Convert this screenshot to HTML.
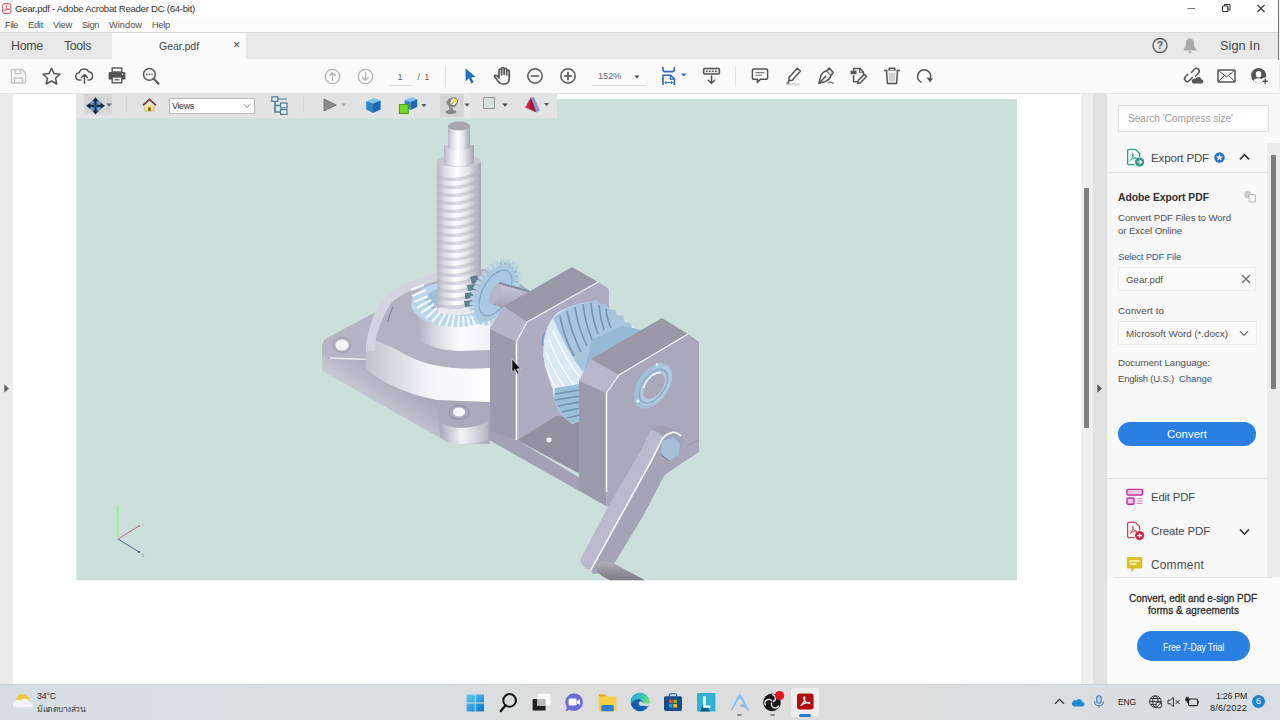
<!DOCTYPE html>
<html>
<head>
<meta charset="utf-8">
<title>Gear.pdf - Adobe Acrobat Reader DC (64-bit)</title>
<style>
*{box-sizing:border-box;margin:0;padding:0}
html,body{width:1280px;height:720px;overflow:hidden;background:#fff;font-family:"Liberation Sans",sans-serif;color:#2b2b2b}
.a{position:absolute}
#root{position:relative;width:1280px;height:720px;overflow:hidden;background:#fff}
.t{position:absolute;white-space:nowrap;line-height:1}
svg{position:absolute;overflow:visible}
.ic{fill:none;stroke:#555;stroke-width:1.5;stroke-linecap:round;stroke-linejoin:round}
</style>
</head>
<body>
<div id="root">
<!-- window chrome -->
<div class="a" style="left:0;top:0;width:1280px;height:17px;background:#fff"></div>
<div class="a" style="left:0;top:17px;width:1280px;height:15px;background:#fcfcfc"></div>
<div class="a" style="left:0;top:32px;width:1280px;height:27px;background:#e8e8e8;border-top:1px solid #d9d9d9"></div>
<div class="a" style="left:112px;top:33px;width:134px;height:26px;background:#fafafa"></div>
<div class="a" style="left:0;top:59px;width:1280px;height:35px;background:#fafafa;border-bottom:1px solid #e4e4e4"></div>
<!-- document area -->
<div class="a" style="left:0;top:94px;width:13px;height:590px;background:#ebebeb"></div>
<div class="a" style="left:13px;top:94px;width:1068px;height:590px;background:#fff"></div>
<div class="a" style="left:1081px;top:94px;width:12px;height:590px;background:#efefef"></div>
<div class="a" style="left:1084px;top:188px;width:5px;height:240px;background:#7f7f7f"></div>
<div class="a" style="left:1093px;top:94px;width:14px;height:590px;background:#e3e3e3"></div>
<svg style="left:1097px;top:384.300px" width="6" height="9" viewBox="0 0 6 9"><path d="M0.3 0.3L5 4.5L0.3 8.7Z" fill="#555"/></svg>
<svg style="left:3.800px;top:384.300px" width="6" height="9" viewBox="0 0 6 9"><path d="M0.3 0.3L5 4.5L0.3 8.7Z" fill="#666"/></svg>
<!-- title icon (pdf) -->
<svg style="left:2px;top:2.6px" width="10" height="11" viewBox="0 0 13 14"><rect x="1" y=".8" width="10.5" height="12.4" rx="1.6" fill="#fff" stroke="#d24a4e" stroke-width="1.3"/><path d="M3.2 10.2C5 8.5 6.3 5.4 6.1 3.6C5.9 2.6 5 3 5.3 4.3C5.9 6.6 8 8.3 9.6 8.3C10.4 8.2 10 7.4 8.9 7.6C7 7.9 4.6 8.9 3.4 10.2Z" fill="none" stroke="#d24a4e" stroke-width="1.1"/></svg>
<!-- window controls -->
<svg style="left:1185px;top:0" width="90" height="17" viewBox="0 0 90 17"><g stroke="#333" stroke-width="1" fill="none"><path d="M2.5 8.5H10" stroke="#777"/><rect x="37.5" y="6" width="5.5" height="5.5" rx="1" stroke-width="1.2"/><path d="M39.5 6V4.5H45V10H43"/><path d="M72.4 4.8L79.6 12M79.600 4.8L72.4 12" stroke-width="1.1"/></g></svg>
<!-- help / bell -->
<svg style="left:1151px;top:37px" width="18" height="18" viewBox="0 0 18 18"><circle cx="9" cy="8.5" r="7" fill="none" stroke="#555" stroke-width="1.3"/><text x="9" y="12.3" font-size="10.5" font-weight="700" text-anchor="middle" fill="#555" font-family="Liberation Sans, sans-serif">?</text></svg>
<svg style="left:1183px;top:38px" width="14" height="16" viewBox="0 0 14 16"><path d="M7 .5C4 .5 3 3 3 5.5C3 8.5 2 10 .6 11.5V12.4H13.4V11.5C12 10 11 8.5 11 5.5C11 3 10 .5 7 .5Z" fill="#a9a9a9"/><path d="M5.4 13.4H8.6C8.6 15.4 5.4 15.4 5.4 13.4Z" fill="#a9a9a9"/></svg>
<!-- left toolbar icons -->
<svg style="left:10px;top:68px" width="17" height="17" viewBox="0 0 17 17"><g fill="none" stroke="#c4c4c4" stroke-width="1.4" stroke-linejoin="round"><path d="M1.5 2.5a1 1 0 0 1 1-1H12L15.5 5V14a1 1 0 0 1-1 1H2.5a1 1 0 0 1-1-1Z"/><path d="M5 1.8V5.6H10.5V1.8M4.5 15V10H12.5V15"/></g></svg>
<svg style="left:42px;top:67px" width="19" height="18" viewBox="0 0 19 18"><path d="M9.5 1.2L12 6.6L17.9 7.2L13.5 11.2L14.8 17L9.5 14L4.2 17L5.5 11.2L1.1 7.2L7 6.6Z" class="ic" stroke-width="1.4"/></svg>
<svg style="left:75px;top:67px" width="19" height="18" viewBox="0 0 19 18"><g class="ic" stroke-width="1.4"><path d="M6 13H4.6A3.6 3.6 0 0 1 4.2 5.8A5 5 0 0 1 13.6 4.8A4.2 4.2 0 0 1 14.6 13H13"/><path d="M9.5 16.5V8M6.6 10.6L9.5 7.6L12.4 10.6"/></g></svg>
<svg style="left:108px;top:67px" width="18" height="17" viewBox="0 0 18 17"><rect x="4.2" y="1" width="9.6" height="4" fill="none" stroke="#555" stroke-width="1.4"/><path d="M2 5H16A1.4 1.4 0 0 1 17.4 6.4V12.6H14V10H4V12.6H.6V6.400000000000001A1.4 1.4 0 0 1 2 5Z" fill="#555"/><rect x="4.2" y="10" width="9.6" height="5.8" fill="#fafafa" stroke="#555" stroke-width="1.4"/><path d="M6.5 12.8H11.5" stroke="#555" stroke-width="1.2"/><circle cx="14.6" cy="7.2" r=".8" fill="#fafafa"/></svg>
<svg style="left:142px;top:67px" width="18" height="18" viewBox="0 0 18 18"><g class="ic" stroke-width="1.5"><circle cx="7.4" cy="7.4" r="5.9"/><path d="M11.8 11.8L16.6 16.8" stroke-width="2"/></g><g fill="#555"><circle cx="4.8" cy="7.4" r=".8"/><circle cx="7.4" cy="7.4" r=".8"/><circle cx="10" cy="7.4" r=".8"/></g></svg>
<!-- page nav -->
<svg style="left:324px;top:68px" width="17" height="17" viewBox="0 0 17 17"><g fill="none" stroke="#b4b4b4" stroke-width="1.3" stroke-linecap="round" stroke-linejoin="round"><circle cx="8.5" cy="8.5" r="7.2"/><path d="M8.5 12.4V4.8M5.6 7.6L8.5 4.6L11.4 7.6"/></g></svg>
<svg style="left:357px;top:68px" width="17" height="17" viewBox="0 0 17 17"><g fill="none" stroke="#b4b4b4" stroke-width="1.3" stroke-linecap="round" stroke-linejoin="round"><circle cx="8.5" cy="8.5" r="7.2"/><path d="M8.5 4.6V12.2M5.6 9.4L8.5 12.4L11.4 9.4"/></g></svg>
<div class="a" style="left:389px;top:85px;width:23px;height:1px;background:#dcdcdc"></div>
<div class="a" style="left:445px;top:66px;width:1px;height:21px;background:#e2e2e2"></div>
<!-- select arrow (blue) -->
<svg style="left:464px;top:67px" width="13" height="18" viewBox="0 0 13 18"><path d="M1.6 1.2V14.2L4.9 11.2L7.3 16.4L9.6 15.3L7.2 10.3L11.6 10Z" fill="#1f6fc4"/></svg>
<!-- hand -->
<svg style="left:492.500px;top:66px" width="22" height="20" viewBox="0 0 19 20" preserveAspectRatio="none"><path d="M5.2 11.4V4.2C5.2 2.6 7.4 2.6 7.4 4.2V9M7.4 8.6V2.8C7.4 1.2 9.6 1.2 9.6 2.8V8.6M9.600000000000001 8.6V3.4C9.6 1.8 11.8 1.8 11.8 3.4V9M11.8 9V5.2C11.8 3.6 14 3.6 14 5.2V12.4C14 16 12 18 9 18C6.600000000000001 18 5.4 16.8 4 14.600000000000001L1.6 11C.8 9.6 2.4 8.6 3.4 9.8L5.2 12" class="ic" stroke-width="1.3"/></svg>
<!-- zoom out/in -->
<svg style="left:526px;top:67px" width="18" height="18" viewBox="0 0 18 18"><g class="ic" stroke-width="1.5"><circle cx="9" cy="9" r="7.2"/><path d="M5.4 9H12.6" stroke-width="1.7"/></g></svg>
<svg style="left:559px;top:67px" width="18" height="18" viewBox="0 0 18 18"><g class="ic" stroke-width="1.5"><circle cx="9" cy="9" r="7.2"/><path d="M5.4 9H12.6M9 5.4V12.6" stroke-width="1.7"/></g></svg>
<div class="a" style="left:592px;top:85px;width:54px;height:1px;background:#dcdcdc"></div>
<svg style="left:634px;top:75px" width="6" height="4" viewBox="0 0 7 5"><path d="M.4 .6H6.6L3.5 4.4Z" fill="#444"/></svg>
<!-- fit width (blue) -->
<svg style="left:661px;top:66px" width="28" height="20" viewBox="0 0 28 20"><g fill="none" stroke="#2a69ae" stroke-width="1.6" stroke-linejoin="round"><path d="M2 1V3.6A2 2 0 0 0 4 5.6H11.400000000000001A2 2 0 0 0 13.4 3.6V1"/><path d="M2 19V9.2H9.6L13.4 13V19"/><path d="M9.4 9.4V13.2H13.2" stroke-width="1.2"/><path d="M4 16.6H11.4M5.4 15.2L4 16.6L5.4 18M10 15.2L11.4 16.6L10 18" stroke-width="1"/></g><path d="M20 7.4H25.6L22.8 10.6Z" fill="#2c6fb7"/></svg>
<!-- keyboard down -->
<svg style="left:702px;top:67px" width="19" height="18" viewBox="0 0 19 18"><g class="ic" stroke-width="1.4"><rect x="1.6" y="1.6" width="15.8" height="5.4" rx="1" fill="#e4e4e4"/><path d="M9.5 9V16M6.4 13.2L9.5 16.4L12.6 13.2"/></g><g fill="#555"><rect x="4" y="3.6" width="1.6" height="1.4"/><rect x="7" y="3.6" width="1.6" height="1.4"/><rect x="10" y="3.6" width="1.6" height="1.4"/><rect x="13" y="3.6" width="1.6" height="1.4"/></g></svg>
<div class="a" style="left:735px;top:66px;width:1px;height:21px;background:#e2e2e2"></div>
<!-- comment -->
<svg style="left:751px;top:67px" width="18" height="18" viewBox="0 0 18 18"><path d="M2.6 2H15.4A1.2 1.2 0 0 1 16.6 3.2V11A1.2 1.2 0 0 1 15.4 12.2H9.4L6.4 15.6V12.2H2.6A1.2 1.2 0 0 1 1.4 11V3.2A1.2 1.2 0 0 1 2.6 2Z" class="ic" stroke-width="1.5" fill="#ececec"/><path d="M4.6 5.6H13.4M4.6 8.2H11" stroke="#777" stroke-width="1.1"/></svg>
<!-- highlighter -->
<svg style="left:784px;top:66px" width="19" height="20" viewBox="0 0 19 20"><path d="M2 18.2H15.6" stroke="#d9d9d9" stroke-width="2.4"/><path d="M13.2 2.2L16.4 5L8.2 14.2L4.8 14.8L5 11.400000000000001Z" class="ic" stroke-width="1.4" fill="#ececec"/><path d="M4.8 14.8L2 17.6H5.6Z" fill="#555"/></svg>
<!-- sign pen -->
<svg style="left:816px;top:66px" width="20" height="20" viewBox="0 0 20 20"><g class="ic" stroke-width="1.4"><path d="M3 17.2L4.800 9.800C6 7.200 8.400 5.400 10.800 4.800L15 9.200C14.400 11.600 12.600 14 10.200 15.200Z"/><path d="M10.800 4.800L13.200 2L17.400 6.400L15 9.200" fill="#dcdcdc"/><path d="M3.200 17L9 11"/><path d="M12.200 17.200C13.200 15.200 13.800 15.400 14 16.800C14.600 15.600 15.400 15.800 15.800 17H17.600" stroke-width="1"/></g><circle cx="9.600" cy="10.400" r="1" fill="#555"/></svg>
<!-- edit pdf -->
<svg style="left:849px;top:66px" width="20" height="20" viewBox="0 0 20 20"><g class="ic" stroke-width="1.4"><path d="M4.6 4V2.4H10.8L14.4 6V8"/><path d="M10.6 2.6V6.2H14.2" stroke-width="1.1"/><path d="M4.6 9.4V15.8H8.6"/><path d="M15.4 8.2L17.6 10.4L11.4 16.8L8.6 17.4L9.2 14.6Z" fill="#ececec"/></g><rect x="1.6" y="4.6" width="6" height="3.6" fill="#555"/></svg>
<!-- trash -->
<svg style="left:883px;top:66px" width="18" height="20" viewBox="0 0 18 20"><g class="ic" stroke-width="1.5"><path d="M1.8 4.4H16.2M6.2 4.2V2.2H11.8V4.2"/><path d="M3.4 4.6L4.4 17.4H13.6L14.6 4.6" fill="#ececec"/></g><path d="M7 7V15M9 7V15M11 7V15" stroke="#bdbdbd" stroke-width="1.2"/></svg>
<!-- rotate -->
<svg style="left:915px;top:66px" width="19" height="20" viewBox="0 0 19 20"><path d="M6 16.2A6.6 6.6 0 1 1 15.4 12.6" class="ic" stroke-width="1.7"/><path d="M11.4 11.6L17.8 12.2L15.2 16.6Z" fill="#555"/></svg>
<!-- right side: link/cloud, mail, user+ -->
<svg style="left:1183px;top:66px" width="22" height="20" viewBox="0 0 22 20"><g class="ic" stroke-width="1.6"><path d="M8.4 6.4L11.4 3.2A2.700000000000001 2.7 0 0 1 15.4 7L12.4 10.2"/><path d="M10.6 8.8L7.6 12A2.7 2.7 0 0 1 3.6 8.2L6 5.6" transform="translate(-1.2 2.6)"/></g><path d="M10.4 17.6H18.8A2.2 2.2 0 0 0 18.6 13.4A3.200000000000001 3.2 0 0 0 12.6 12.8A2.6 2.6 0 0 0 10.4 17.6Z" fill="#555"/></svg>
<svg style="left:1217px;top:69px" width="19" height="14" viewBox="0 0 19 14"><g class="ic" stroke-width="1.3"><rect x="1" y="1" width="17" height="12" rx=".6"/><path d="M1.4 1.4L9.5 8L17.6 1.4M1.4 12.6L7.4 6.4M17.6 12.6L11.6 6.4" stroke-width="1"/></g></svg>
<svg style="left:1250px;top:67px" width="20" height="19" viewBox="0 0 20 19"><circle cx="8.6" cy="8.6" r="7.6" fill="#555"/><path d="M8.6 4A2.8 3.2 0 0 1 8.6 10.4A2.8 3.2 0 0 1 8.6 4ZM3.4 14C4 12 6 11.2 8.6 11.2C11.2 11.2 13.2 12 13.8 14C12.4 15.4 10.6 16 8.6 16C6.6 16 4.8 15.4 3.4 14Z" fill="#fafafa"/><circle cx="15.2" cy="14.2" r="3.8" fill="#fafafa"/><path d="M15.2 11.6V16.8M12.6 14.2H17.8" stroke="#555" stroke-width="1.4"/></svg>
<div class="a" style="left:1278px;top:0;width:1px;height:60px;background:#767676"></div>
<div class="a" style="left:1279px;top:0;width:1px;height:94px;background:#f2f2f2"></div>
<!-- PDF page with 3D model -->
<svg style="left:76px;top:98px" width="942" height="483" viewBox="76 98 942 483">
<defs>
<linearGradient id="gCyl" x1="0" x2="1" y1="0" y2="0"><stop offset="0" stop-color="#b9b9c6"/><stop offset=".18" stop-color="#dcdce6"/><stop offset=".45" stop-color="#ffffff"/><stop offset=".7" stop-color="#e2e2ea"/><stop offset="1" stop-color="#a5a5b3"/></linearGradient>
<linearGradient id="gDome" x1="0" x2="1" y1="0" y2="0"><stop offset="0" stop-color="#c2c1d0"/><stop offset=".22" stop-color="#d9d9e4"/><stop offset=".55" stop-color="#f6f6fb"/><stop offset="1" stop-color="#fefeff"/></linearGradient>
<linearGradient id="gHub" x1="0" x2="1" y1="0" y2="0"><stop offset="0" stop-color="#a9a8ba"/><stop offset=".25" stop-color="#d6d6e2"/><stop offset=".6" stop-color="#fbfbff"/><stop offset="1" stop-color="#f0f0f7"/></linearGradient>
<linearGradient id="gFl" gradientUnits="userSpaceOnUse" x1="408" y1="382" x2="386" y2="414"><stop offset="0" stop-color="#a9a8b9"/><stop offset=".6" stop-color="#babac8"/><stop offset="1" stop-color="#cacad6"/></linearGradient>
<linearGradient id="gLug" x1="0" x2="1" y1="0" y2="0"><stop offset="0" stop-color="#a5a4b6"/><stop offset=".45" stop-color="#f2f2f8"/><stop offset=".75" stop-color="#d5d5e0"/><stop offset="1" stop-color="#b5b4c4"/></linearGradient>
<linearGradient id="gArm" x1="0" x2="1" y1="0" y2="0"><stop offset="0" stop-color="#c3c2d3"/><stop offset="1" stop-color="#aeadc1"/></linearGradient>
<linearGradient id="gWorm" x1="0" x2="1" y1="0" y2="1"><stop offset="0" stop-color="#dbeaf5"/><stop offset=".5" stop-color="#a9cbe0"/><stop offset="1" stop-color="#7fa6c2"/></linearGradient>
<linearGradient id="gShaft" x1="0" x2="0" y1="0" y2="1"><stop offset="0" stop-color="#c9c8d8"/><stop offset=".5" stop-color="#b1b0c3"/><stop offset="1" stop-color="#8f8ea2"/></linearGradient>
<linearGradient id="gHandle" x1="0" x2="0" y1="0" y2="1"><stop offset="0" stop-color="#b4b3be"/><stop offset=".5" stop-color="#94939e"/><stop offset="1" stop-color="#7e7d88"/></linearGradient>
</defs>
<rect x="76.3" y="99.2" width="940.7" height="481.1" fill="#cbe0db"/>
<!-- A: flange plate -->
<path d="M322 346 Q324 338 331 336 L378 311 L380 345 L490 402 L490 444 L449 443 L322 371 Z" fill="url(#gFl)"/>
<path d="M322 346 Q324 338 331 336 L378 311 L380 360 L331 359 Q324 356 322 352 Z" fill="#b6b5c5"/>
<path d="M330 358 L368 359.5" stroke="#e9e9f1" stroke-width="1.6" fill="none"/>
<ellipse cx="342" cy="345" rx="9" ry="7.5" fill="none" stroke="#9c9bad" stroke-width="1"/>
<ellipse cx="342" cy="345" rx="6.5" ry="5.5" fill="#f4f4fa"/>
<!-- front lug -->
<path d="M439 412 Q440 404 459 403 Q482 404 488 412 L488 440 Q470 446 449 443 L440 436 Z" fill="url(#gLug)"/>
<path d="M437 402 L490 402 L490 420 Q478 428 459 428 Q441 426 438 416 Z" fill="#abaabb"/>
<ellipse cx="459" cy="412.5" rx="10" ry="7" fill="none" stroke="#8f8ea1" stroke-width="1"/>
<ellipse cx="459" cy="412" rx="6" ry="4.5" fill="#f6f6fb"/>
<!-- B: dome -->
<path d="M366 355 Q366 338 370 327 Q374 312 385 296 Q400 283 427 275 L490 268 L490 402 L437 400 Q410 395 389 384 Q372 376 366 368 Z" fill="url(#gDome)"/>
<path d="M372 340 Q372 322 380 308 Q392 290 427 277 L490 268 L490 368 Q440 372 408 356 Q384 342 372 340 Z" fill="#b3b2c3"/>
<path d="M366 352 Q366 338 370 327 Q374 312 385 296 Q400 283 427 275 L437 272.5 L437 281 L430 283 Q405 291 392 302 Q383 315 379 328 Q375 338 375 350 Z" fill="#d4d4e0"/>
<path d="M388 322 Q389 314 393 307" stroke="#85849a" stroke-width="1.2" fill="none"/>
<!-- C: hub + ring gear -->
<path d="M415 306 L417 338 Q430 350 460 351 L490 350 L490 300 Z" fill="url(#gHub)"/>
<ellipse cx="457" cy="304" rx="46" ry="23" fill="#b9d6ea"/>
<ellipse cx="460" cy="300" rx="34" ry="15" fill="#9fc0d8"/>
<g stroke="#f4f9fd" stroke-width="2.2" fill="none">
<path d="M411 290L424 285M412 296L426 290M414 302L428 296M417 308L431 300M421 313L434 304M426 318L438 307M432 322L442 310M439 325L446 312M446 327L450 314M452 328L454 315M458 329L459 316M464 329L463 316M470 328L467 316M476 327L471 315"/>
</g>
<!-- D: screw -->
<rect x="437" y="161" width="44" height="149" fill="url(#gCyl)"/>
<ellipse cx="459" cy="310" rx="22" ry="5" fill="#e8e8f0"/>
<g stroke="#b4b3c4" stroke-width="3.2" fill="none" opacity=".5"><path d="M437 177Q459 184 481 171M437 185Q459 192 481 179M437 193Q459 200 481 187M437 201Q459 208 481 195M437 209Q459 216 481 203M437 217Q459 224 481 211M437 225Q459 232 481 219M437 233Q459 240 481 227M437 241Q459 248 481 235M437 249Q459 256 481 243M437 257Q459 264 481 251M437 265Q459 272 481 259M437 273Q459 280 481 267M437 281Q459 288 481 275M437 289Q459 296 481 283M437 297Q459 304 481 291M437 305Q459 312 481 299"/></g>
<ellipse cx="459" cy="161" rx="22" ry="6" fill="#c6c6d0"/>
<path d="M444 145 L444 163 Q459 170 474 163 L474 145 Z" fill="url(#gCyl)"/>
<path d="M448 126 L448 148 Q459 153 470 148 L470 126 Z" fill="url(#gCyl)"/>
<ellipse cx="459" cy="126" rx="11" ry="4.6" fill="#a7a7ae"/>
<!-- E: pinion + shaft -->
<g fill="#62818f"><path d="M470 277L477 275L479 282L472 284ZM467 285L475 284L476 290L468 291ZM465 293L473 292L473 298L465 299ZM464 301L472 300L473 306L465 307Z"/></g>
<path d="M500 262 L509 262 L517 271 L519 283 L531 292 L498 285 Z" fill="#9fb6c8"/>
<ellipse cx="495" cy="292" rx="18.5" ry="33" transform="rotate(28 495 292)" fill="none" stroke="#b9d2e5" stroke-width="6" stroke-dasharray="3.6 1.8"/>
<ellipse cx="494.5" cy="293" rx="17" ry="31" transform="rotate(28 494.5 293)" fill="#a9c8e2"/>
<ellipse cx="495.5" cy="293" rx="13" ry="25" transform="rotate(28 495.5 293)" fill="none" stroke="#86a9c8" stroke-width="1.2"/>
<path d="M498 283 L530 292 L524 316 L492 304 Z" fill="url(#gShaft)"/>
<ellipse cx="495" cy="294" rx="5" ry="11" transform="rotate(22 495 294)" fill="#b9b8ca"/>
<path d="M499 283 L529 291.5" stroke="#86859a" stroke-width="2"/>
<!-- F: gear box -->
<!-- plate 1 -->
<path d="M490 329 L504 306 L527 322 L516.5 342 L516.5 440 L490 432 Z" fill="#9c9bae"/>
<path d="M490 329 L504 306 L527 322 L516.5 342 Z" fill="#b7b5c8"/>
<path d="M504 306 L572 267 L598 282 L527 322 Z" fill="#9a98a6"/>
<path d="M527 322 L598 282 L609 289 L609 390 L581 420 L553 418 L517 440 L516.5 342 Z" fill="#aeacc2"/>
<!-- floor -->
<path d="M517 440 L556 416 L580 417 L580 474 Z" fill="#93919f"/>
<path d="M489 431 L517 440 L580 478 L606 492 L606 506 L489 440 Z" fill="#a3a1b3"/>
<ellipse cx="549" cy="440" rx="2.6" ry="2.4" fill="#f4f4f8"/>
<!-- worm gear -->
<path d="M544 341 Q546 324 557 313 Q570 305 588 302 L600 304 L608 308 L623 319 L637 329 L592 356 L580 380 L580 421 L572 424 L565 418 L559 411 L554 400 L553 390 Q546 372 543 355 Z" fill="#d9e9f5"/>
<path d="M553 318 Q568 305 588 302 L597 300 L601 305 L606 304 L609 309 L615 310 L617 315 L623 316 L625 322 L631 323 L632 328 L637 329 L592 356 L583 372 Q566 350 553 318 Z" fill="#a7c6de"/>
<path d="M592 340 L622 326 L637 329 L642 331 L592 361 L584 372 Z" fill="#96b9d6"/>
<g stroke="#6f8ea8" stroke-width="1.6" fill="none" opacity=".9"><path d="M560 316Q564 338 574 356M567 311Q571 332 581 352M575 307Q578 328 587 346M583 304Q585 322 592 340M591 303Q592 318 598 334M599 305Q600 318 604 330M606 309Q607 320 611 328"/></g>
<g stroke="#fff" stroke-width="1.3" fill="none"><path d="M546 352Q556 380 578 404M549 340Q560 370 580 392M553 330Q564 358 582 380M545 364Q552 386 570 408"/></g>
<path d="M543 345 Q541 338 545 333" stroke="#7fa0b8" stroke-width="1.5" fill="none"/>
<path d="M555 388 L580 384 L580 421 L572 424 L565 418 L559 411 L554 400 Z" fill="#9cbfd8"/>
<g stroke="#6f93ae" stroke-width="1.5" fill="none"><path d="M555 394L580 390M555 400L580 396M558 406L580 402M562 412L580 408M567 418L580 415"/></g>
<!-- plate 2 -->
<path d="M579 381 L591 359 L619 375 L606.5 393 L606.5 506 L579 490 Z" fill="#9c9aad"/>
<path d="M579 381 L591 359 L619 375 L606.5 393 Z" fill="#b9b7cb"/>
<path d="M591 359 L662 318 L688 334 L619 375 Z" fill="#9b99a8"/>
<path d="M619 375 L688 334 L699 342 L699 452 L664 475 L655 492 L645 510 L606.5 506 L606.5 393 Z" fill="#a9a7bc"/>
<path d="M687 446 L699 440" stroke="#9694a8" stroke-width="1"/>
<path d="M516.5 342 L516.5 440" stroke="#fff" stroke-width="1.5"/>
<path d="M527 322 L598 282" stroke="#f2f2f8" stroke-width="1.2"/>
<path d="M606.5 393 L606.5 492" stroke="#fff" stroke-width="1.5"/>
<path d="M606.5 393 L619 375 L688 334" stroke="#f2f2f8" stroke-width="1.2" fill="none"/>
<path d="M516.5 342 L527 322" stroke="#f2f2f8" stroke-width="1.2" fill="none"/>
<!-- bearing -->
<g transform="rotate(35 653 386)">
<ellipse cx="653" cy="386" rx="15.5" ry="25.5" fill="#a3c2d8"/>
<ellipse cx="654.5" cy="384.5" rx="13" ry="22.5" fill="#b4cadd"/>
<ellipse cx="653.5" cy="386" rx="11" ry="19" fill="none" stroke="#8fb0c8" stroke-width="1.8"/>
<ellipse cx="654" cy="385.5" rx="8.4" ry="14.6" fill="#aaa8bd"/>
<path d="M646.5 393 A8.4 14.6 0 0 1 652 371" fill="none" stroke="#fff" stroke-width="1.3"/>
</g>
<circle cx="638" cy="401" r="1.6" fill="#e8f4fa"/>
<circle cx="657" cy="364.500" r="1.4" fill="#e8f4fa"/>
<!-- G: crank arm -->
<path d="M674 432 L682 436 Q685 441 682 447 L674 467 L664 476 L643 516 L617 559 Q608 574 593 574 L590.6 570 L652.5 458.7 L662.5 438.7 Q667 433 674 432 Z" fill="#a5a3b8"/>
<path d="M650 431 Q655 425 662.5 425.6 L674 432 Q666 434 662.5 438.7 L652.5 458.7 L590.6 570 Q582 568 580 560 L607.5 508 L641 450 Z" fill="#bbb9cd"/>
<path d="M651 430 Q656 425 663 425.4 L675 430 L682 436 L674 432 Q667 432 663 436 Q657 431 651 430 Z" fill="#a09eaf"/>
<path d="M662.5 441 L673.7 437.5 L680 443.7 L678.7 455 L669.4 461 L660 454 Z" fill="#a3c0d7"/>
<path d="M660 454 L669.4 461" stroke="#6f7f92" stroke-width="1"/>
<path d="M681 436 Q677 432 673 432.3 Q666 434 662.5 438.7 L652.5 458.7 L590.6 570.5" stroke="#fff" stroke-width="1.5" fill="none"/>
<path d="M596 564 Q603 559 613 563 L645 580.3 L610 580.3 Q600 576 597 571 Z" fill="url(#gHandle)"/>
<!-- H: mouse cursor -->
<path d="M512 359 L512 372 L515 369.5 L517.2 374 L518.8 373.2 L516.8 369 L520.5 368.6 Z" fill="#111" stroke="#fff" stroke-width=".5"/>
<!-- I: axis triad -->
<path d="M117.6 538 L117.6 506" stroke="#a4e8ad" stroke-width="2.2" opacity=".85"/>
<path d="M118 539 L139 526" stroke="#b3626c" stroke-width=".9"/>
<path d="M118 539 L139 552" stroke="#48567a" stroke-width=".9"/>
<circle cx="139" cy="552" r=".9" fill="#2c3a5c"/><circle cx="139" cy="526" r=".8" fill="#a84a56"/>
<text x="142" y="525.5" font-size="4.5" fill="#e8b8c0" font-family="Liberation Sans, sans-serif">x</text>
<text x="142" y="556.5" font-size="4.5" fill="#7f8aa6" font-family="Liberation Sans, sans-serif">z</text>
</svg>
<!-- 3D toolbar -->
<div class="a" style="left:76px;top:94px;width:481px;height:23px;background:#e3e3e3"></div>
<div class="a" style="left:76px;top:117px;width:481px;height:2px;background:linear-gradient(#e3e3e3,rgba(215,228,224,.6))"></div>
<div class="a" style="left:84px;top:94px;width:28px;height:23px;background:linear-gradient(#d4d4d4 0,#d6d6d6 80%,#e9e9e9 100%)"></div>
<div class="a" style="left:105px;top:95px;width:1px;height:22px;background:#dedede"></div>
<svg style="left:86px;top:96.500px" width="19" height="18" viewBox="0 0 19 18"><path d="M9.500 .4L18.600 8.800L9.500 17.400L.4 8.800Z" fill="#6aa3d0"/><g fill="#1b2740"><path d="M9.500 .2L12.400 4.200H6.600Z"/><path d="M9.500 17.600L12.400 13.600H6.600Z"/><path d="M.2 8.800L4.400 5.800V11.800Z"/><path d="M18.800 8.800L14.600 5.800V11.800Z"/></g><path d="M9.500 3V15M3 8.800H16" stroke="#1b2740" stroke-width="2.200"/><path d="M6.800 6.200L9.500 8.800L12.200 6.200M6.800 11.400L9.500 8.800L12.200 11.400" stroke="#3f6f9c" stroke-width="1" fill="none"/></svg>
<svg style="left:106px;top:103px" width="6" height="4" viewBox="0 0 6 4"><path d="M.3 .4H5.7L3 3.7Z" fill="#666"/></svg>
<div class="a" style="left:126px;top:97px;width:1px;height:16px;background:#d6d6d6"></div>
<svg style="left:142px;top:98px" width="15" height="14" viewBox="0 0 15 14"><path d="M3 7V13H12V7Z" fill="#f6e782"/><path d="M6.2 13V9.4H8.8V13Z" fill="#7a4a12"/><path d="M1 7.4L7.5 1.4L14 7.4" fill="none" stroke="#7a3a2c" stroke-width="1.8" stroke-linejoin="miter"/><path d="M3 8.4V13H12V8.4" fill="none" stroke="#c9b544" stroke-width=".8"/></svg>
<div class="a" style="left:169px;top:98px;width:86px;height:16px;background:#fff;border:1px solid #b8b8b8"></div>
<svg style="left:243px;top:103px" width="8" height="6" viewBox="0 0 8 6"><path d="M1 1.2L4 4.4L7 1.2" fill="none" stroke="#888" stroke-width="1"/></svg>
<!-- model tree -->
<svg style="left:271px;top:96px" width="18" height="20" viewBox="0 0 18 20"><path d="M4 3V16H10M4 9.5H10M4 3H14" fill="none" stroke="#4f7f92" stroke-width="1.6"/><rect x=".8" y=".8" width="6" height="4.6" fill="#d8e8ee" stroke="#4f7f92" stroke-width="1.2"/><rect x="9.6" y="7" width="6.4" height="4.8" fill="#e6f0f4" stroke="#4f7f92" stroke-width="1.2"/><rect x="9.6" y="13.6" width="6.400000000000002" height="4.8" fill="#e6f0f4" stroke="#4f7f92" stroke-width="1.2"/><path d="M8 3H16" stroke="#8fb0bc" stroke-width="2"/></svg>
<div class="a" style="left:303px;top:97px;width:1px;height:16px;background:#d6d6d6"></div>
<!-- play -->
<svg style="left:323px;top:98px" width="26" height="14" viewBox="0 0 26 14"><path d="M1 1L13.4 7L1 13Z" fill="#8e8e8e" stroke="#6f6f6f" stroke-width=".8"/><path d="M18.4 5.6H23.2L20.8 8.6Z" fill="#b0b0b0"/></svg>
<!-- blue cube -->
<svg style="left:365px;top:97px" width="17" height="17" viewBox="0 0 17 17"><path d="M1.2 4.2L9 1L15.6 3.4L8 6.6Z" fill="#7cc3ee"/><path d="M1.2 4.2L8 6.6V16L1.2 12.6Z" fill="#2f86cc"/><path d="M8 6.6L15.6 3.4V12.4L8 16Z" fill="#1f68ae"/></svg>
<!-- green + blue cubes -->
<svg style="left:398px;top:96px" width="30" height="19" viewBox="0 0 30 19"><path d="M6.6 4L13.4 1.2L19.2 3.2L12.6 6Z" fill="#7cc3ee"/><path d="M6.6 4L12.6 6V14L6.6 11.4Z" fill="#2f86cc"/><path d="M12.6 6L19.2 3.2V11L12.6 14Z" fill="#1f68ae"/><rect x="1.4" y="8.6" width="8.8" height="9" fill="#6fdc2c" stroke="#3f9a16" stroke-width="1"/><path d="M23.4 8H28.4L25.9 11.2Z" fill="#555"/></svg>
<!-- lights (pressed) -->
<div class="a" style="left:440px;top:94px;width:23px;height:23px;background:#d4d4d4"></div>
<div class="a" style="left:463px;top:94px;width:7px;height:23px;background:#e9e9e9;border-left:1px solid #dadada"></div>
<svg style="left:443px;top:95px" width="18" height="20" viewBox="0 0 18 20"><ellipse cx="8" cy="17" rx="5.4" ry="1.9" fill="#858585"/><path d="M6.4 12.4H9.8L10.2 16.6H6Z" fill="#8f8f8f"/><path d="M3.2 7.600L6 3.200L12 2.600L14.800 6.400L12.600 11.600L6.400 12.600Z" fill="#8c8c8c"/><ellipse cx="10.600" cy="6.800" rx="3.600" ry="4.200" transform="rotate(35 10.600 6.800)" fill="#ecebc4" stroke="#6e6e6e" stroke-width=".9"/><path d="M8.200 9.600L13.200 4" stroke="#7a7a6a" stroke-width=".9"/><path d="M11.200 3.600A3.400 3.400 0 0 1 13.600 7.600L10.600 6.800Z" fill="#f0e24e"/></svg>
<svg style="left:463.5px;top:103px" width="6" height="4" viewBox="0 0 6 4"><path d="M.3 .4H5.7L3 3.7Z" fill="#555"/></svg>
<!-- bg colour -->
<div class="a" style="left:483px;top:97px;width:12px;height:12px;background:#d5e1dd;border:1px solid #8e9a98"></div>
<svg style="left:502px;top:103px" width="6" height="4" viewBox="0 0 6 4"><path d="M.3 .4H5.7L3 3.7Z" fill="#444"/></svg>
<!-- cross section -->
<svg style="left:523px;top:96px" width="28" height="18" viewBox="0 0 28 18"><path d="M7.6 1.4L11 1L17 14.6L13.4 16.4Z" fill="#7f9fd0"/><path d="M7.6 1.4L2.2 11.6L13.4 16.4L9.6 6Z" fill="#d12a4e"/><path d="M7.6 1.4L9.8 6.4L12.8 15.6L6.4 12.4Z" fill="#a8163a"/><path d="M21 7H26L23.5 10.2Z" fill="#555"/></svg>
<!-- right tools panel -->
<div class="a" style="left:1107px;top:94px;width:173px;height:590px;background:#f8f8f8"></div>
<div class="a" style="left:1107px;top:578px;width:173px;height:106px;background:#fbfbfb"></div>
<div class="a" style="left:1118px;top:105px;width:151px;height:27px;background:#fff;border:1px solid #dddddd"></div>
<div class="a" style="left:1267px;top:143px;width:13px;height:434px;background:#ececec"></div>
<div class="a" style="left:1271px;top:155px;width:5px;height:234px;background:#7d7d7d"></div>
<div class="a" style="left:1107px;top:172px;width:160px;height:1px;background:#e3e3e3"></div>
<div class="a" style="left:1107px;top:478px;width:160px;height:1px;background:#e3e3e3"></div>
<div class="a" style="left:1114px;top:577px;width:158px;height:1px;background:#e0e0e0"></div>
<!-- export pdf icon -->
<svg style="left:1126px;top:148px" width="19" height="19" viewBox="0 0 19 19"><path d="M8.6 16.6H3A1.4 1.4 0 0 1 1.6 15.2V2.8A1.4 1.4 0 0 1 3 1.4H9.4L13.6 5.6V9" fill="none" stroke="#2e9c8a" stroke-width="1.3"/><path d="M4.2 12.4C6 10.8 7.4 7.8 7.2 6C7 5 6.2 5.4 6.4 6.6C7 8.8 8.800000000000001 10.4 10.4 10.4C11.2 10.4 10.8 9.6 9.8 9.8C8 10 5.6 11 4.2 12.4Z" fill="none" stroke="#2e9c8a" stroke-width=".9"/><circle cx="13.6" cy="14" r="4.6" fill="#2e9c8a"/><path d="M11.2 14H15.4M13.8 12.2L15.6 14L13.8 15.8" fill="none" stroke="#fff" stroke-width="1.2"/></svg>
<svg style="left:1214px;top:152px" width="11" height="11" viewBox="0 0 11 11"><circle cx="5.5" cy="5.5" r="5.2" fill="#2d6fc4"/><path d="M5.5 2.2L6.4 4.4L8.8 4.6L7 6.2L7.6 8.6L5.5 7.3L3.4 8.6L4 6.2L2.2 4.6L4.6 4.4Z" fill="#fff"/></svg>
<svg style="left:1239px;top:153px" width="11" height="8" viewBox="0 0 11 8"><path d="M1 6.4L5.5 1.6L10 6.4" fill="none" stroke="#333" stroke-width="1.6"/></svg>
<!-- copy icon -->
<svg style="left:1243px;top:190px" width="14" height="13" viewBox="0 0 14 13"><circle cx="4.6" cy="4.6" r="3.6" fill="#cfcfcf"/><rect x="6" y="4.6" width="6.4" height="7.4" rx="1" fill="#f6f6f6" stroke="#b5b5b5" stroke-width="1"/></svg>
<!-- file field -->
<div class="a" style="left:1118px;top:267px;width:138px;height:24px;background:#fafafa;border:1px solid #ececec"></div>
<svg style="left:1241px;top:274px" width="10" height="10" viewBox="0 0 10 10"><path d="M1 1L9 9M9 1L1 9" stroke="#666" stroke-width="1.2"/></svg>
<div class="a" style="left:1118px;top:321px;width:139px;height:24px;background:#fafafa;border:1px solid #ececec"></div>
<svg style="left:1239px;top:330px" width="10" height="7" viewBox="0 0 10 7"><path d="M1 1.2L5 5.4L9 1.2" fill="none" stroke="#666" stroke-width="1.2"/></svg>
<!-- convert button -->
<div class="a" style="left:1118px;top:422px;width:138px;height:24px;background:#2a7fe3;border-radius:12px"></div>
<!-- edit pdf icon -->
<svg style="left:1126px;top:488px" width="18" height="18" viewBox="0 0 18 18"><rect x="1" y="1.4" width="15.6" height="5.6" rx="1" fill="#f3c6e6" stroke="#c3309c" stroke-width="1.4"/><rect x="1" y="10" width="7" height="6.2" rx="1" fill="#f3c6e6" stroke="#c3309c" stroke-width="1.4"/><path d="M10.6 10.6H16.6M10.6 13H16.6M10.6 15.4H16.6" stroke="#d585bf" stroke-width="1"/></svg>
<!-- create pdf icon -->
<svg style="left:1126px;top:521px" width="19" height="20" viewBox="0 0 19 20"><path d="M8.6 16.6H3A1.4 1.4 0 0 1 1.6 15.2V2.8A1.4 1.4 0 0 1 3 1.4H9.4L13.6 5.6V9.4" fill="none" stroke="#c9445a" stroke-width="1.3"/><path d="M4.2 12.4C6 10.8 7.4 7.8 7.2 6C7 5 6.2 5.4 6.4 6.6C7 8.8 8.800000000000001 10.4 10.4 10.4C11.2 10.4 10.8 9.6 9.8 9.8C8 10 5.6 11 4.2 12.4Z" fill="none" stroke="#c9445a" stroke-width=".9"/><circle cx="13.6" cy="14.6" r="4.6" fill="#d7263d"/><path d="M11.2 14.6H16M13.6 12.2V17" fill="none" stroke="#fff" stroke-width="1.4"/></svg>
<svg style="left:1239px;top:528px" width="11" height="8" viewBox="0 0 11 8"><path d="M1 1.4L5.5 6.2L10 1.4" fill="none" stroke="#333" stroke-width="1.6"/></svg>
<!-- comment icon -->
<svg style="left:1126px;top:556px" width="17" height="18" viewBox="0 0 17 18"><path d="M2 1H15A1.2 1.2 0 0 1 16.2 2.2V11.2A1.2 1.2 0 0 1 15 12.4H8.6L5.4 16.2V12.4H2A1.2 1.2 0 0 1 .8 11.2V2.2A1.2 1.2 0 0 1 2 1Z" fill="#d8c22a"/><path d="M3.6 5H13.400000000000002M3.6 8H10.4" stroke="#fff7c0" stroke-width="1.3"/></svg>
<!-- trial button -->
<div class="a" style="left:1137px;top:631px;width:113px;height:30px;background:#2a7fe3;border-radius:15px"></div>
<!-- windows taskbar -->
<div class="a" style="left:0;top:684px;width:1280px;height:36px;background:linear-gradient(90deg,#d6dde1 0,#dadfe1 25%,#dddddd 45%,#dddddd 68%,#d9dee2 100%);border-top:1px solid #cfd5d8"></div>
<!-- weather -->
<svg style="left:13px;top:692px" width="20" height="18" viewBox="0 0 20 18"><circle cx="9.6" cy="8.6" r="6.6" fill="#f3c53a"/><path d="M2 16.6H16.6A3.4 3.4 0 0 0 16.4 9.8A4.8 4.8 0 0 0 7.8 8.6A4 4 0 0 0 2 16.6Z" fill="#f1f4f8"/><path d="M2 16.6H16.6A3.4 3.4 0 0 0 18.4 15L1 15.4Z" fill="#d4dbe4"/></svg>
<!-- start -->
<svg style="left:466px;top:694px" width="19" height="18" viewBox="0 0 19 18"><defs><linearGradient id="gw" x1="0" y1="0" x2="1" y2="1"><stop offset="0" stop-color="#5fd0f5"/><stop offset="1" stop-color="#0c74d1"/></linearGradient></defs><path d="M.6 .4H8.800000000000001V8.4H.6ZM9.8 .4H18V8.4H9.8ZM.6 9.4H8.8V17.4H.6ZM9.8 9.4H18V17.4H9.8Z" fill="url(#gw)"/></svg>
<!-- search -->
<svg style="left:499px;top:692px" width="19" height="21" viewBox="0 0 19 21"><circle cx="10.6" cy="8.4" r="6.3" fill="none" stroke="#151515" stroke-width="2"/><path d="M6.4 13.4L1.8 19" stroke="#151515" stroke-width="2.4" stroke-linecap="round"/></svg>
<!-- task view -->
<svg style="left:532px;top:693px" width="20" height="19" viewBox="0 0 20 19"><rect x=".6" y="6" width="13" height="11.6" rx="1.2" fill="#1f1f1f"/><rect x="5" y="1" width="13.6" height="11.8" rx="1.2" fill="#f7f7f7"/><rect x="5" y="6" width="8.6" height="6.8" fill="#b9b9b9"/></svg>
<!-- chat -->
<svg style="left:564px;top:692px" width="20" height="21" viewBox="0 0 20 21"><path d="M10 1.4A8.8 8.8 0 1 1 5.6 17.8L1.6 19.4L2.8 15A8.8 8.8 0 0 1 10 1.4Z" fill="#6a6ad8"/><rect x="4.6" y="6.6" width="8" height="7" rx="1.4" fill="#fff"/><path d="M13 9L16 7.2V13L13 11.2Z" fill="#fff"/></svg>
<!-- explorer -->
<svg style="left:598px;top:694px" width="19" height="18" viewBox="0 0 19 18"><path d="M.6 2A1.4 1.4 0 0 1 2 .6H7L9 2.6H17.2A1.2 1.2 0 0 1 18.4 3.8V16A1.2 1.2 0 0 1 17.2 17.2H1.8A1.2 1.2 0 0 1 .6 16Z" fill="#f7cf45"/><path d="M.6 1.8A1.2 1.2 0 0 1 1.8 .6H7L8.6 2.2H.6Z" fill="#dca81f"/><path d="M3.2 17.2V12.6A1.6 1.6 0 0 1 4.8 11H14.2A1.6 1.6 0 0 1 15.8 12.6V17.2Z" fill="#2c7fd1"/></svg>
<!-- edge -->
<svg style="left:630px;top:692px" width="20" height="20" viewBox="0 0 20 20"><defs><linearGradient id="ge" x1="0" y1="0" x2="1" y2=".4"><stop offset="0" stop-color="#279fe0"/><stop offset=".55" stop-color="#33c3c0"/><stop offset="1" stop-color="#66e27c"/></linearGradient></defs><circle cx="10" cy="10" r="9.3" fill="#1768ba"/><path d="M10 .7A9.3 9.3 0 0 1 19.3 10C19.3 12.6 17.4 13.4 15 13.4L12.6 13.4C14 11 13 8 10 7.4C7 6.8 3.400 8.4 1.6 12C-.2 6 4.600 .7 10 .7Z" fill="url(#ge)"/><path d="M10.8 9.3A2.300 2.300 0 1 0 12.6 13.400L18.400 14.200L19.300 11.400L13 11.200A2.300 2.300 0 0 0 10.8 9.3Z" fill="#dddddd"/><path d="M1.6 12C3.400 8.4 7 6.8 10 7.4C7.600 8 6.400 10.600 7 13C7.800 16 10.600 17.800 14 17.400C15.400 17.200 16.600 16.600 17.400 15.800A9.3 9.3 0 0 1 1.6 12Z" fill="#125aa6"/></svg>
<!-- store -->
<svg style="left:663px;top:692px" width="20" height="20" viewBox="0 0 20 20"><path d="M6.4 4.6V3.4A1.8 1.8 0 0 1 8.2 1.6H11.8A1.8 1.8 0 0 1 13.6 3.4V4.6" fill="none" stroke="#2b6cb8" stroke-width="1.4"/><path d="M1 5.8A1.6 1.6 0 0 1 2.6 4.2H17.4A1.6 1.6 0 0 1 19 5.8V16.4A2.6 2.6 0 0 1 16.4 19H3.6A2.6 2.6 0 0 1 1 16.4Z" fill="#1c4c8c"/><rect x="6" y="7.6" width="3.6" height="3.6" fill="#f25022"/><rect x="10.4" y="7.6" width="3.6" height="3.6" fill="#7fba00"/><rect x="6" y="12" width="3.6" height="3.6" fill="#00a4ef"/><rect x="10.4" y="12" width="3.6" height="3.6" fill="#ffb900"/></svg>
<!-- L app -->
<svg style="left:697px;top:693px" width="19" height="19" viewBox="0 0 19 19"><rect x="0" y="0" width="18.4" height="18.4" fill="#2eb3d0"/><path d="M3 18.4L6 11.4H9L13 18.4Z" fill="#155a8a"/><path d="M6.2 3.2H8.8V12.4H13.4V14.8H6.2Z" fill="#fff"/></svg>
<!-- A app -->
<svg style="left:730px;top:693px" width="20" height="19" viewBox="0 0 20 19"><path d="M1.6 17.6C4 11 7 4.600000000000001 9.8 1.2C12.8 5 16 11.4 18.2 17.6C16 14.6 12.8 12.8 10 12.8C12.4 11.4 13.4 11 14 11.4C12.8 8.4 11.4 5.8 9.8 4C7.2 7.4 4.4 12.6 1.6 17.6Z" fill="#8cc8f0" stroke="#74b6e6" stroke-width=".8"/></svg>
<div class="a" style="left:737px;top:714px;width:5px;height:2px;background:#8a8f93;border-radius:1px"></div>
<!-- OBS -->
<svg style="left:762px;top:690px" width="24" height="22" viewBox="0 0 24 22"><circle cx="10" cy="12.4" r="8.8" fill="#17171a"/><g fill="none" stroke="#e6e6e6" stroke-width="1.5"><path d="M10 4.4A3.8 3.8 0 0 1 10.8 11.8"/><path d="M16.8 15.6A3.8 3.8 0 0 1 9.8 12.6"/><path d="M3.6 15.4A3.8 3.8 0 0 1 9.8 11"/></g><circle cx="17.6" cy="5.6" r="4.6" fill="#e8141c"/></svg>
<div class="a" style="left:770px;top:714px;width:5px;height:2px;background:#8a8f93;border-radius:1px"></div>
<!-- acrobat (active) -->
<div class="a" style="left:791px;top:688px;width:28px;height:29px;background:#ededee;border-radius:3px"></div>
<svg style="left:797px;top:693px" width="17" height="17" viewBox="0 0 17 17"><rect x="0" y=".4" width="16.6" height="16" rx="2.6" fill="#b30b0f"/><path d="M3.6 12.6C6 10.6 8 7 7.8 4.6C7.6 3.4 6.4 3.8 6.8 5.4C7.6 8.2 10 10.4 12.4 10.4C13.6 10.4 13 9.2 11.6 9.4C9.2 9.6 5.8 10.8 3.6 12.6Z" fill="none" stroke="#fff" stroke-width="1.2"/></svg>
<div class="a" style="left:799px;top:714px;width:12px;height:3px;background:#1f7ad3;border-radius:1.5px"></div>
<!-- tray -->
<svg style="left:1054px;top:698px" width="11" height="7" viewBox="0 0 11 7"><path d="M1 5.8L5.5 1.4L10 5.8" fill="none" stroke="#333" stroke-width="1.3"/></svg>
<svg style="left:1071px;top:698px" width="14" height="9" viewBox="0 0 14 9"><path d="M3 8.400000000000002H11.200000000000001A2.2 2.2 0 0 0 11.4 4A3.4 3.4 0 0 0 5.2 2.6A3 3 0 0 0 3 8.4Z" fill="#1f88d8"/></svg>
<svg style="left:1093px;top:695px" width="12" height="14" viewBox="0 0 12 14"><rect x="3.8" y=".8" width="4.4" height="7.4" rx="2.2" fill="#bcd6f2" stroke="#3978c2" stroke-width="1.1"/><path d="M1.6 6.4A4.4 4.4 0 0 0 10.4 6.4M6 10.8V13" fill="none" stroke="#3978c2" stroke-width="1.1"/></svg>
<svg style="left:1148px;top:694px" width="15" height="15" viewBox="0 0 15 15"><g fill="none" stroke="#333" stroke-width="1"><circle cx="7.4" cy="7.6" r="5.8"/><ellipse cx="7.4" cy="7.6" rx="2.6" ry="5.8"/><path d="M1.6 7.6H13.2M2.6 4.6H12.2M2.6 10.6H8"/></g><circle cx="10.8" cy="11" r="3" fill="#d9dee1" stroke="#333" stroke-width="1"/><path d="M8.8 13L12.8 9" stroke="#333" stroke-width="1"/></svg>
<svg style="left:1167px;top:696px" width="14" height="12" viewBox="0 0 14 12"><path d="M1 4.200000000000001H3.2L6.4 1.4V10.6L3.2 7.8H1Z" fill="none" stroke="#333" stroke-width="1"/><path d="M8.6 4L12.6 8M12.6 4L8.6 8" stroke="#333" stroke-width="1"/></svg>
<svg style="left:1185px;top:696px" width="15" height="12" viewBox="0 0 15 12"><rect x="3.6" y="3" width="9" height="6.6" rx="1.4" fill="none" stroke="#222" stroke-width="1.1"/><path d="M13 5V7.6" stroke="#222" stroke-width="1.4"/><path d="M.8 2.200000000000001H4V5H.8ZM1.6 .6V2.2M3.2 .6V2.2M2.4 5V7H4" fill="#222" stroke="#222" stroke-width=".8"/></svg>
<div class="a" style="left:1252px;top:695px;width:13px;height:13px;border-radius:50%;background:#1b80d6"></div>
<div class="t" id="t0" style="left:15px;top:4.00px;font-size:9.6px;color:#333;letter-spacing:-0.266px;">Gear.pdf - Adobe Acrobat Reader DC (64-bit)</div>
<div class="t" id="t1" style="left:5px;top:20.65px;font-size:9.3px;color:#505050;letter-spacing:-0.496px;">File</div>
<div class="t" id="t2" style="left:28px;top:20.65px;font-size:9.3px;color:#505050;letter-spacing:-0.258px;">Edit</div>
<div class="t" id="t3" style="left:53px;top:20.65px;font-size:9.3px;color:#505050;letter-spacing:-0.246px;">View</div>
<div class="t" id="t4" style="left:82px;top:20.65px;font-size:9.3px;color:#505050;letter-spacing:-0.402px;">Sign</div>
<div class="t" id="t5" style="left:109px;top:20.65px;font-size:9.3px;color:#505050;letter-spacing:-0.013px;">Window</div>
<div class="t" id="t6" style="left:152px;top:20.65px;font-size:9.3px;color:#505050;letter-spacing:-0.281px;">Help</div>
<div class="t" id="t7" style="left:11px;top:40.10px;font-size:12.4px;color:#484848;letter-spacing:-0.266px;">Home</div>
<div class="t" id="t8" style="left:64px;top:40.10px;font-size:12.4px;color:#484848;letter-spacing:-0.388px;">Tools</div>
<div class="t" id="t9" style="left:159px;top:41.10px;font-size:10.6px;color:#484848;letter-spacing:-0.080px;">Gear.pdf</div>
<div class="t" id="t10" style="left:233px;top:39.00px;font-size:12px;color:#444;letter-spacing:0.984px;">×</div>
<div class="t" id="t11" style="left:1220px;top:40.20px;font-size:12.6px;color:#444;letter-spacing:0.112px;">Sign In</div>
<div class="t" id="t12" style="left:397.5px;top:72.50px;font-size:9px;color:#666;letter-spacing:-0.016px;">1</div>
<div class="t" id="t13" style="left:417.5px;top:72.50px;font-size:9px;color:#666;letter-spacing:0.828px;">/ 1</div>
<div class="t" id="t14" style="left:598px;top:72.35px;font-size:9.3px;color:#6a6a6a;letter-spacing:-0.195px;">152%</div>
<div class="t" id="t15" style="left:172px;top:102.00px;font-size:9px;color:#333;letter-spacing:-0.372px;">Views</div>
<div class="t" id="t16" style="left:1128px;top:114.40px;font-size:10.2px;color:#a0a0a0;letter-spacing:-0.062px;">Search 'Compress size'</div>
<div class="t" id="t17" style="left:1151px;top:152.20px;font-size:11.6px;color:#4a4a4a;letter-spacing:-0.192px;">Export PDF</div>
<div class="t" id="t18" style="left:1118px;top:192.85px;font-size:10.3px;color:#2f2f2f;font-weight:700;">Adobe Export PDF</div>
<div class="t" id="t19" style="left:1118px;top:213.15px;font-size:9.7px;color:#505050;letter-spacing:-0.103px;">Convert PDF Files to Word</div>
<div class="t" id="t20" style="left:1118px;top:226.15px;font-size:9.7px;color:#505050;letter-spacing:-0.114px;">or Excel Online</div>
<div class="t" id="t21" style="left:1118px;top:252.25px;font-size:9.5px;color:#2d5b8e;letter-spacing:-0.200px;">Select PDF File</div>
<div class="t" id="t22" style="left:1126px;top:274.65px;font-size:9.7px;color:#505050;letter-spacing:-0.021px;">Gear.pdf</div>
<div class="t" id="t23" style="left:1118px;top:306.10px;font-size:9.8px;color:#505050;letter-spacing:0.080px;">Convert to</div>
<div class="t" id="t24" style="left:1126px;top:329.10px;font-size:9.8px;color:#505050;letter-spacing:-0.007px;">Microsoft Word (*.docx)</div>
<div class="t" id="t25" style="left:1118px;top:358.15px;font-size:9.7px;color:#505050;letter-spacing:-0.036px;">Document Language:</div>
<div class="t" id="t26" style="left:1118px;top:374.25px;font-size:9.5px;color:#505050;letter-spacing:-0.186px;">English (U.S.)</div>
<div class="t" id="t27" style="left:1179px;top:374.25px;font-size:9.5px;color:#2d5b8e;letter-spacing:-0.047px;">Change</div>
<div class="t" id="t28" style="left:1167px;top:428.80px;font-size:11.4px;color:#fff;letter-spacing:0.016px;">Convert</div>
<div class="t" id="t29" style="left:1151px;top:492.30px;font-size:11.4px;color:#4a4a4a;letter-spacing:-0.197px;">Edit PDF</div>
<div class="t" id="t30" style="left:1151px;top:526.25px;font-size:11.5px;color:#4a4a4a;letter-spacing:-0.172px;">Create PDF</div>
<div class="t" id="t31" style="left:1151px;top:560.05px;font-size:11.9px;color:#4a4a4a;letter-spacing:0.208px;">Comment</div>
<div class="t" id="t32" style="left:1129px;top:593.50px;font-size:10px;color:#2f2f2f;letter-spacing:-0.034px;-webkit-text-stroke:.3px #2f2f2f;">Convert, edit and e-sign PDF</div>
<div class="t" id="t33" style="left:1148px;top:606.00px;font-size:10px;color:#2f2f2f;letter-spacing:0.053px;-webkit-text-stroke:.3px #2f2f2f;">forms &amp; agreements</div>
<div class="t" id="t34" style="left:1163px;top:641.70px;font-size:10.6px;color:#fff;letter-spacing:-0.098px;transform:scaleX(.82);transform-origin:0 50%;">Free 7-Day Trial</div>
<div class="t" id="t35" style="left:37px;top:692.10px;font-size:8.8px;color:#1c1c1c;letter-spacing:-0.164px;">34°C</div>
<div class="t" id="t36" style="left:37px;top:705.25px;font-size:8.5px;color:#444;letter-spacing:-0.500px;">มีแดดบางส่วน</div>
<div class="t" id="t37" style="left:1118px;top:697.70px;font-size:8.6px;color:#222;letter-spacing:-0.208px;">ENG</div>
<div class="t" id="t38" style="left:1216px;top:692.10px;font-size:8.8px;color:#222;letter-spacing:-0.252px;">1:26 PM</div>
<div class="t" id="t39" style="left:1210px;top:703.90px;font-size:9.2px;color:#222;letter-spacing:0.154px;">8/6/2022</div>
<div class="t" id="t40" style="left:1256px;top:697.30px;font-size:9px;color:#fff;letter-spacing:-0.016px;">6</div>
</div>
</body>
</html>
